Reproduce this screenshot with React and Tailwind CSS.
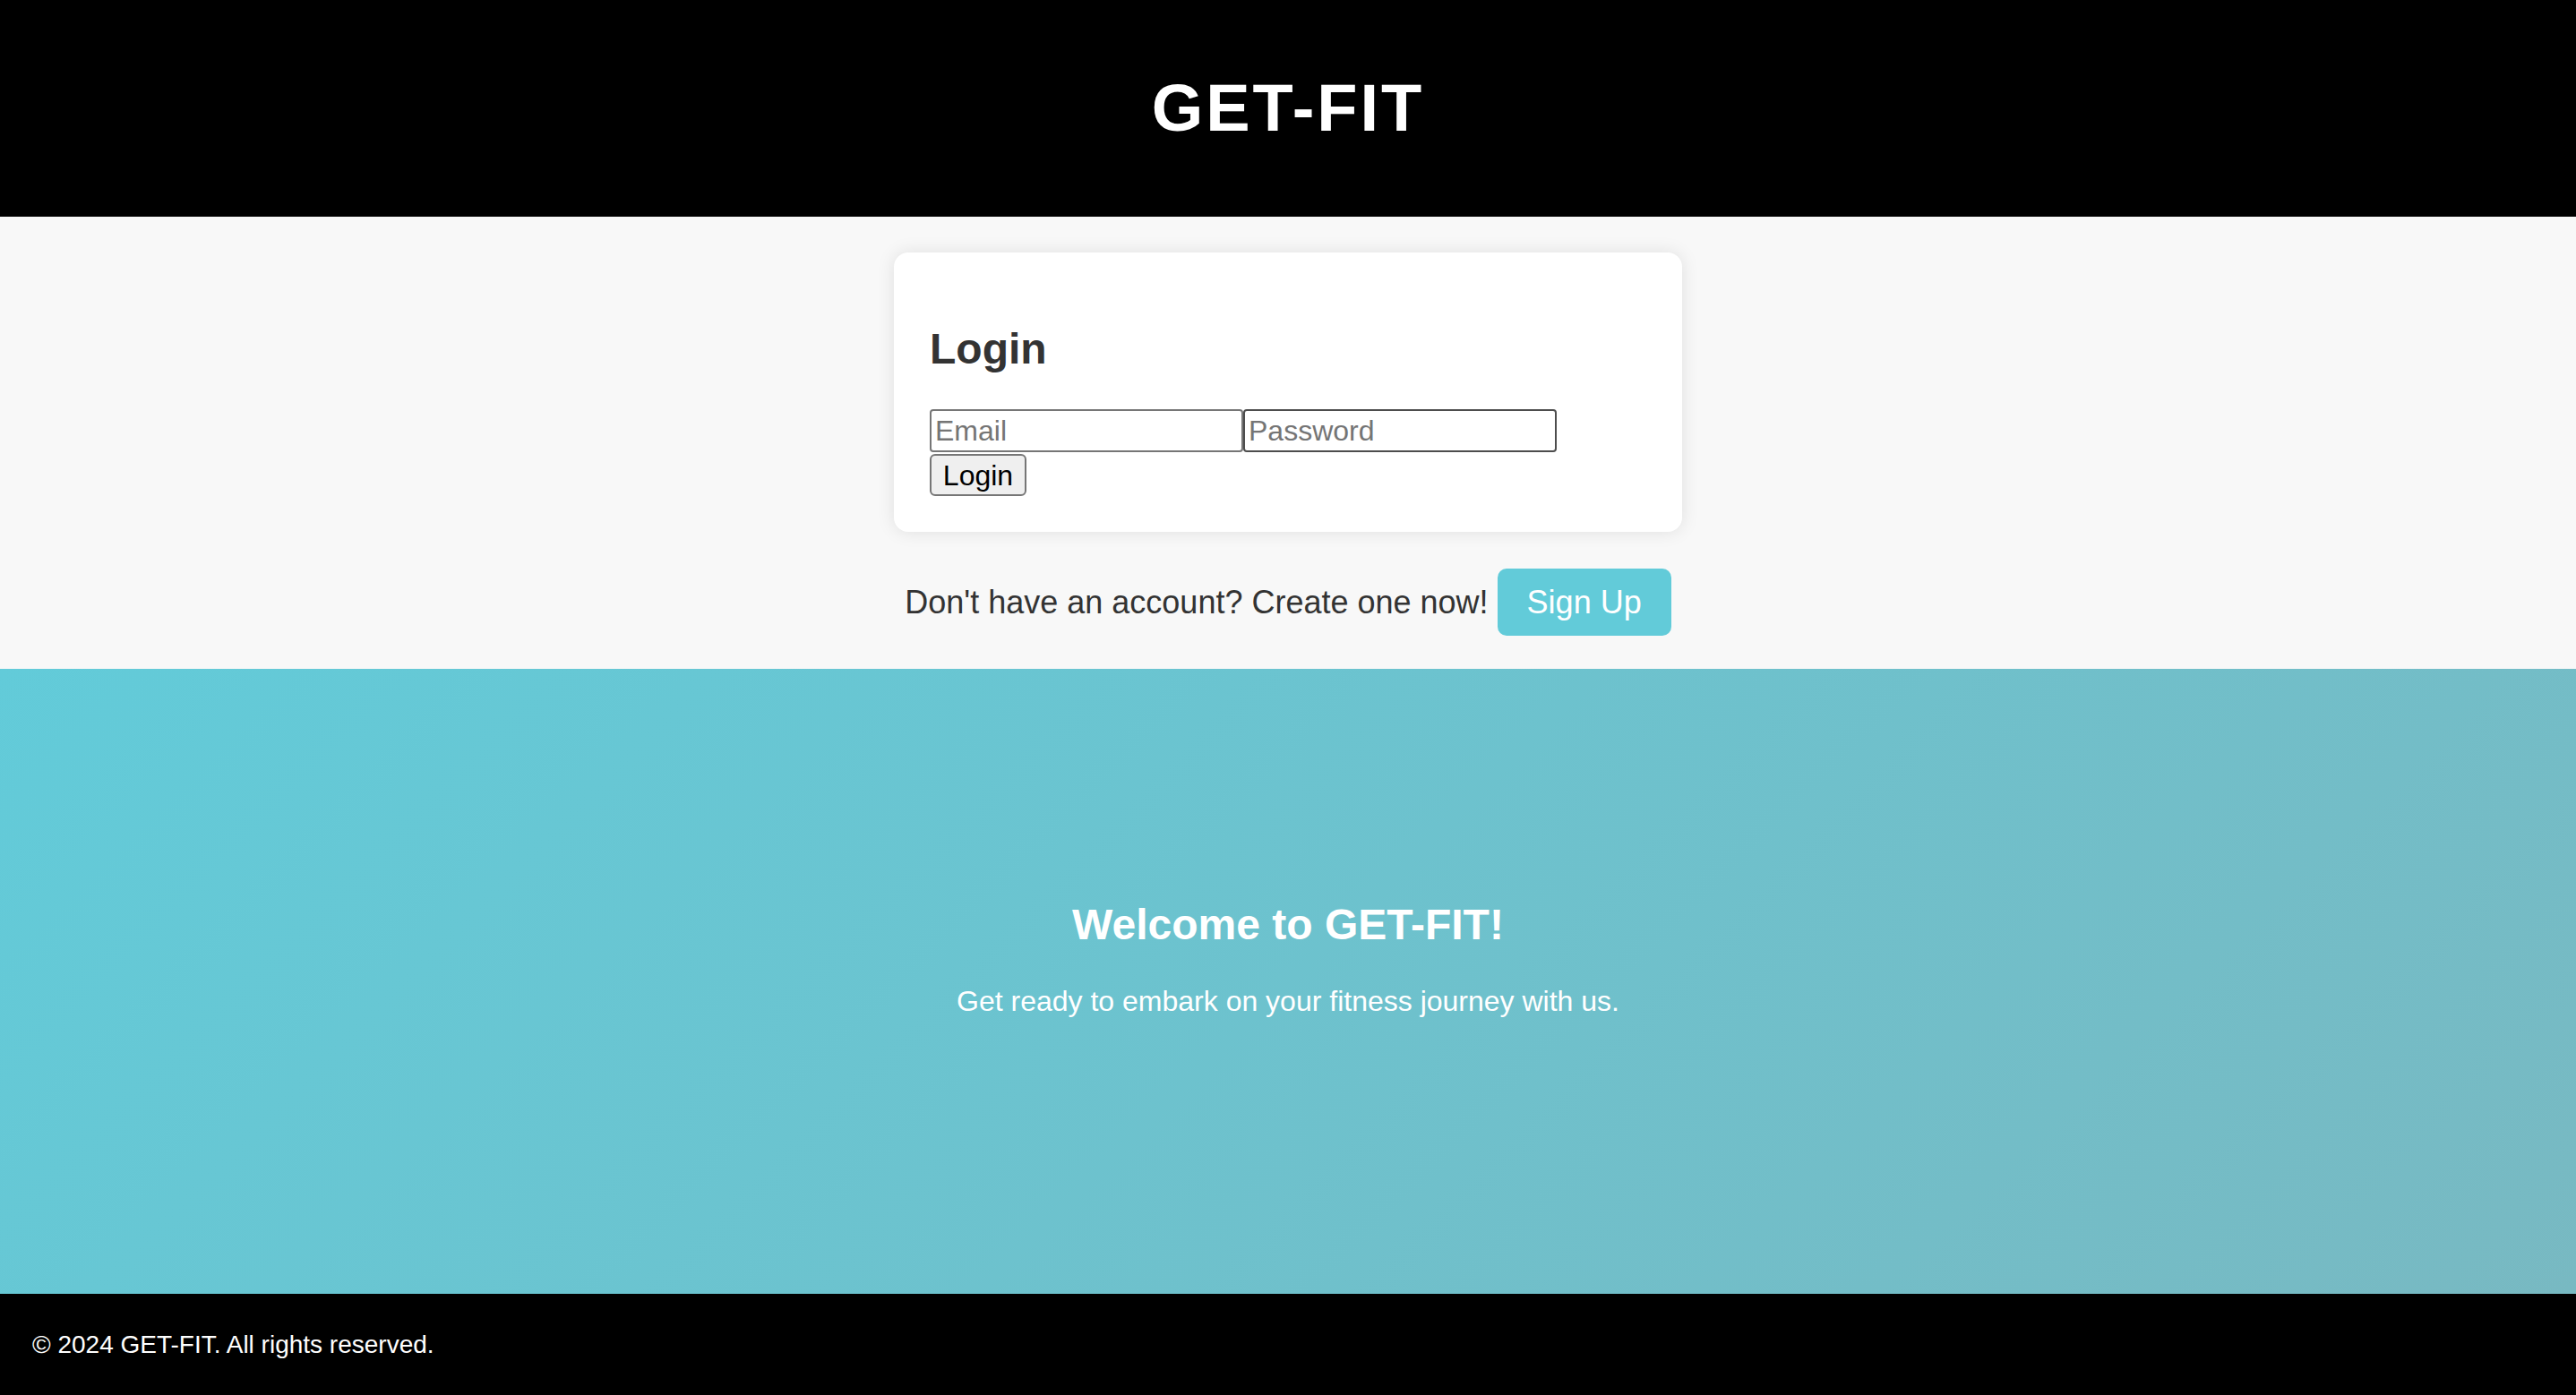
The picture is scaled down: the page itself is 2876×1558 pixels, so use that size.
import React, { useState } from 'react';

export default function App() {
  const [email, setEmail] = useState('');
  const [password, setPassword] = useState('');

  const handleSubmit = (e) => {
    e.preventDefault();
  };

  return (
    <div className="min-h-screen flex flex-col font-['Liberation_Sans',Arial,Helvetica,sans-serif]">
      <header className="h-[242px] bg-black flex items-center justify-center">
        <h1 className="text-[74px] leading-none font-bold tracking-[3px] text-white">GET-FIT</h1>
      </header>

      <main className="bg-[#f8f8f8] flex flex-col items-center pt-[40px] pb-[37px]">
        <div className="w-[880px] bg-white rounded-[16px] shadow-[0_0_20px_rgba(0,0,0,0.1)] px-[40px] pt-[80px] pb-[40px]">
          <h2 className="text-[48px] leading-[55px] font-bold text-[#333] mb-[40px]">Login</h2>
          <form onSubmit={handleSubmit} className="flex flex-col items-start gap-[2px]">
            <div className="flex">
              <input
                type="email"
                placeholder="Email"
                value={email}
                onChange={e => setEmail(e.target.value)}
                className="w-[350px] h-[48px] border-2 border-[#767676] rounded-[4px] px-[4px] text-[32px] text-black placeholder:text-[#757575] bg-white outline-none"
              />
              <input
                type="password"
                placeholder="Password"
                value={password}
                onChange={e => setPassword(e.target.value)}
                className="w-[350px] h-[48px] border-2 border-[#4d4d4d] rounded-[4px] px-[4px] text-[32px] text-black placeholder:text-[#757575] bg-white outline-none"
              />
            </div>
            <button
              type="submit"
              className="w-[108px] h-[47px] bg-[#efefef] border-2 border-[#767676] rounded-[6px] text-[32px] leading-none text-black"
            >
              Login
            </button>
          </form>
        </div>

        <div className="mt-[41px] flex items-center gap-[10px]">
          <span className="text-[36px] text-[#333]">Don't have an account? Create one now!</span>
          <button className="h-[75px] px-[33px] bg-[#62cbd9] rounded-[10px] text-[36px] text-white">
            Sign Up
          </button>
        </div>
      </main>

      <section className="bg-[linear-gradient(135deg,#62cbd9,#78b9c2)] flex flex-col items-center pt-[258px] pb-[308px] text-white">
        <h2 className="text-[48px] leading-[55px] font-bold mb-[40px]">Welcome to GET-FIT!</h2>
        <p className="text-[32px] leading-[37px]">Get ready to embark on your fitness journey with us.</p>
      </section>

      <footer className="h-[113px] bg-black flex items-center px-[36px]">
        <p className="text-[28px] text-white">© 2024 GET-FIT. All rights reserved.</p>
      </footer>
    </div>
  );
}
